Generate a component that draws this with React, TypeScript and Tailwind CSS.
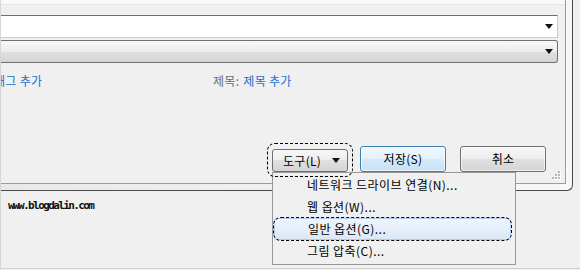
import React from "react";

const KR = { fontFamily: '"Noto Sans CJK KR", "Noto Sans", sans-serif' };

// small black ▼ used by the comboboxes and the split button
const Caret = () => (
  <svg width="8" height="5" viewBox="0 0 8 5" className="shrink-0">
    <polygon points="0,0 8,0 4,5" fill="#111" />
  </svg>
);

const btnGradient =
  "bg-[linear-gradient(to_bottom,#f7f7f7_0%,#ededed_50%,#e0e0e0_50%,#d5d5d5_100%)]";

const menuItems = [
  "네트워크 드라이브 연결(N)...",
  "웹 옵션(W)...",
  "일반 옵션(G)...",
  "그림 압축(C)...",
];

export default function App() {
  return (
    <div
      className="relative flex h-[270px] w-[580px] flex-col overflow-hidden border-l border-[#d6d6d6] bg-[#f0f0f0] text-[12px] text-black"
      style={KR}
    >
      {/* dialog frame */}
      <div className="flex h-[191px] w-[572px] flex-col rounded-br-[6px] border-b border-r border-[#4a4a4a] bg-[linear-gradient(to_right,#e9e9e9,#f8f8f8)] pb-[6px] pr-[6px]">
        <div className="relative flex h-[184px] w-[565px] flex-col border-b border-r border-[#9c9c9c] bg-[#f0f0f0]">
          <div className="h-[5px] border-b border-[#e6e6e6] bg-[#f9f9f9]" />

          {/* file name input */}
          <div className="mt-[10px] flex h-[23px] w-[557px] items-center justify-end border border-l-0 border-[#b5cfe7] border-t-[#3d7bad] bg-white pr-[4px]">
            <Caret />
          </div>

          {/* file type combobox */}
          <div
            className={`mt-[2px] flex h-[23px] w-[557px] items-center justify-end rounded-r-[3px] border border-l-0 border-[#707070] pr-[4px] ${btnGradient}`}
          >
            <Caret />
          </div>

          {/* tags / title row (the tag link is clipped by the window edge) */}
          <div className="mt-[10px] flex h-[16px] items-center leading-[16px] tracking-[0.3px]">
            <div className="w-[212px] shrink-0 overflow-hidden">
              <span className="ml-[-7px] whitespace-nowrap text-[#1a6fd0]">태그 추가</span>
            </div>
            <span className="whitespace-nowrap text-[#6d6d6d]">제목:</span>
            <span className="ml-[4px] whitespace-nowrap text-[#1a6fd0]">제목 추가</span>
          </div>

          {/* buttons */}
          <div className="ml-[271px] mt-[57px] flex h-[26px] items-end tracking-[0.3px]">
            <div
              className={`flex h-[23px] w-[76px] items-center rounded-[3px] border border-[#707070] pl-[10px] pr-[7px] ${btnGradient}`}
            >
              <span className="flex-1 leading-none">도구(L)</span>
              <Caret />
            </div>
            <div className="ml-[12px] flex h-[26px] w-[86px] items-center justify-center rounded-[3px] border border-[#3c7fb1] bg-[linear-gradient(to_bottom,#eff7fd_0%,#e4f1fb_50%,#d5e9f9_50%,#c9e2f7_100%)] shadow-[inset_0_0_0_1px_rgba(255,255,255,0.7)]">
              저장(S)
            </div>
            <div
              className={`ml-[14px] flex h-[26px] w-[86px] items-center justify-center rounded-[3px] border border-[#707070] shadow-[inset_0_0_0_1px_rgba(255,255,255,0.6)] ${btnGradient}`}
            >
              취소
            </div>
          </div>

          {/* size grip */}
          <svg width="10" height="10" viewBox="0 0 10 10" className="absolute bottom-[3px] right-[4px]">
            {[
              [7, 1],
              [4, 4],
              [7, 4],
              [1, 7],
              [4, 7],
              [7, 7],
            ].map(([x, y]) => (
              <g key={`${x}-${y}`}>
                <rect x={x + 1} y={y + 1} width="2" height="2" fill="#ffffff" />
                <rect x={x} y={y} width="2" height="2" fill="#b9b9b9" />
              </g>
            ))}
          </svg>
        </div>
      </div>

      {/* area below the dialog */}
      <div className="h-[78px] border-b border-[#d0d0d0] pl-[7px] pt-[4px]">
        <span
          className="text-[11px] font-bold leading-[13px] tracking-[-1.6px] text-[#111]"
          style={{ fontFamily: '"DejaVu Sans Mono", monospace' }}
        >
          www.blogdalin.com
        </span>
      </div>

      {/* tools dropdown menu */}
      <div className="absolute left-[271px] top-[172px] flex h-[93px] w-[244px] flex-col border border-[#979797] bg-[#f0f0f0] py-[1px] tracking-[0.45px]">
        {menuItems.map((label, i) => (
          <div
            key={label}
            className={`mx-[1px] flex h-[22px] items-center rounded-[3px] pl-[33px] leading-none ${
              i === 2
                ? "mr-[4px] border border-[#aecbea] bg-[linear-gradient(to_bottom,#f0f5fc,#dce8f6)] pl-[32px]"
                : ""
            }`}
          >
            {label}
          </div>
        ))}
      </div>

      {/* dashed annotation outlines */}
      <div className="absolute left-[266px] top-[143px] h-[34px] w-[86px] rounded-[8px] border border-dashed border-black" />
      <div className="absolute left-[272px] top-[217px] h-[24px] w-[239px] rounded-[8px] border border-dashed border-black" />
    </div>
  );
}
